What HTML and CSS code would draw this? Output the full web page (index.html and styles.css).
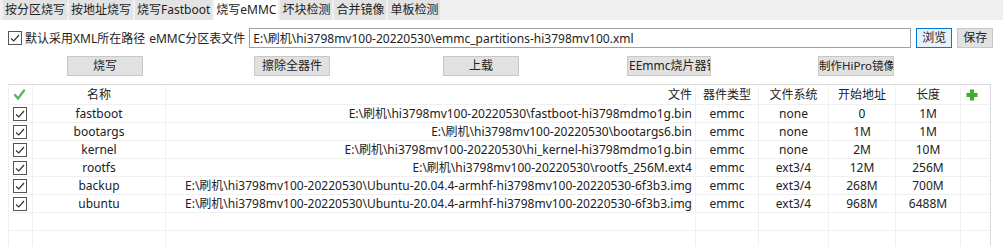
FILE: index.html
```html
<!DOCTYPE html>
<html lang="zh-CN">
<head>
    <meta charset="UTF-8">
    <title>烧写eMMC</title>
    <link rel="stylesheet" href="styles.css">
</head>
<body>
<div class="tabs">
    <span class="tab">按分区烧写</span>
    <span class="tab">按地址烧写</span>
    <span class="tab">烧写Fastboot</span>
    <span class="tab tab--active">烧写eMMC</span>
    <span class="tab">坏块检测</span>
    <span class="tab">合并镜像</span>
    <span class="tab">单板检测</span>
</div>

<div class="path-row">
    <label class="check-label">
        <span class="box"><svg width="12" height="12" viewBox="0 0 12 12"><path d="M2 6.5 L4.8 9 L10 3" fill="none" stroke="#333" stroke-width="1.2"/></svg></span>
        默认采用XML所在路径
    </label>
    <span class="path-label">eMMC分区表文件</span>
    <input type="text" class="path-input" value="E:\刷机\hi3798mv100-20220530\emmc_partitions-hi3798mv100.xml">
    <button class="btn btn--small btn--focus">浏览</button>
    <button class="btn btn--small">保存</button>
</div>

<div class="actions">
    <button class="btn">烧写</button>
    <button class="btn">擦除全器件</button>
    <button class="btn">上载</button>
    <button class="btn btn--clip">EEmmc烧片器镜像</button>
    <button class="btn">制作HiPro镜像</button>
</div>

<div class="grid-wrap">
<table class="grid">
    <thead>
    <tr>
        <th class="c-check"><svg width="11" height="11" viewBox="0 0 11 11"><path d="M1 6 L4 9.5 L10 1.5" fill="none" stroke="#5cb85c" stroke-width="2.4" stroke-linecap="round"/></svg></th>
        <th class="c-name">名称</th>
        <th class="c-file">文件</th>
        <th class="c-type">器件类型</th>
        <th class="c-fs">文件系统</th>
        <th class="c-start">开始地址</th>
        <th class="c-len">长度</th>
        <th class="c-add"><svg width="12" height="12" viewBox="0 0 12 12"><path d="M4 0.5 H8 V4 H11.5 V8 H8 V11.5 H4 V8 H0.5 V4 H4 Z" fill="#3fae2a"/></svg></th>
    </tr>
    </thead>
    <tbody>
    <tr>
        <td class="c-check"><span class="box"><svg width="12" height="12" viewBox="0 0 12 12"><path d="M2 6.5 L4.8 9 L10 3" fill="none" stroke="#333" stroke-width="1.2"/></svg></span></td>
        <td class="c-name">fastboot</td>
        <td class="c-file">E:\刷机\hi3798mv100-20220530\fastboot-hi3798mdmo1g.bin</td>
        <td>emmc</td><td>none</td><td>0</td><td>1M</td><td></td>
    </tr>
    <tr>
        <td class="c-check"><span class="box"><svg width="12" height="12" viewBox="0 0 12 12"><path d="M2 6.5 L4.8 9 L10 3" fill="none" stroke="#333" stroke-width="1.2"/></svg></span></td>
        <td class="c-name">bootargs</td>
        <td class="c-file">E:\刷机\hi3798mv100-20220530\bootargs6.bin</td>
        <td>emmc</td><td>none</td><td>1M</td><td>1M</td><td></td>
    </tr>
    <tr>
        <td class="c-check"><span class="box"><svg width="12" height="12" viewBox="0 0 12 12"><path d="M2 6.5 L4.8 9 L10 3" fill="none" stroke="#333" stroke-width="1.2"/></svg></span></td>
        <td class="c-name">kernel</td>
        <td class="c-file">E:\刷机\hi3798mv100-20220530\hi_kernel-hi3798mdmo1g.bin</td>
        <td>emmc</td><td>none</td><td>2M</td><td>10M</td><td></td>
    </tr>
    <tr>
        <td class="c-check"><span class="box"><svg width="12" height="12" viewBox="0 0 12 12"><path d="M2 6.5 L4.8 9 L10 3" fill="none" stroke="#333" stroke-width="1.2"/></svg></span></td>
        <td class="c-name">rootfs</td>
        <td class="c-file">E:\刷机\hi3798mv100-20220530\rootfs_256M.ext4</td>
        <td>emmc</td><td>ext3/4</td><td>12M</td><td>256M</td><td></td>
    </tr>
    <tr>
        <td class="c-check"><span class="box"><svg width="12" height="12" viewBox="0 0 12 12"><path d="M2 6.5 L4.8 9 L10 3" fill="none" stroke="#333" stroke-width="1.2"/></svg></span></td>
        <td class="c-name">backup</td>
        <td class="c-file">E:\刷机\hi3798mv100-20220530\Ubuntu-20.04.4-armhf-hi3798mv100-20220530-6f3b3.img</td>
        <td>emmc</td><td>ext3/4</td><td>268M</td><td>700M</td><td></td>
    </tr>
    <tr>
        <td class="c-check"><span class="box"><svg width="12" height="12" viewBox="0 0 12 12"><path d="M2 6.5 L4.8 9 L10 3" fill="none" stroke="#333" stroke-width="1.2"/></svg></span></td>
        <td class="c-name">ubuntu</td>
        <td class="c-file">E:\刷机\hi3798mv100-20220530\Ubuntu-20.04.4-armhf-hi3798mv100-20220530-6f3b3.img</td>
        <td>emmc</td><td>ext3/4</td><td>968M</td><td>6488M</td><td></td>
    </tr>
    <tr class="empty"><td></td><td></td><td></td><td></td><td></td><td></td><td></td><td></td></tr>
    <tr class="empty"><td></td><td></td><td></td><td></td><td></td><td></td><td></td><td></td></tr>
    </tbody>
</table>
</div>
</body>
</html>
```

FILE: styles.css
```css
html, body {
    margin: 0;
    padding: 0;
    background-color: #ffffff;
    overflow: hidden;
}

body {
    font-family: "Noto Sans", "Noto Sans CJK SC", sans-serif;
    font-size: 12px;
    color: #222;
    width: 1003px;
    height: 246px;
}

.tabs {
    display: flex;
    gap: 2px;
    height: 20px;
    padding: 0 0 0 3px;
    background: #f0f0f0;
    align-items: stretch;
}

.tab {
    display: flex;
    align-items: center;
    padding: 0 2px;
    background: #e3e3e3;
    color: #222;
    line-height: 20px;
}

.tab--active {
    background: #ffffff;
}

.path-row {
    display: flex;
    align-items: center;
    height: 20px;
    margin-top: 8px;
    padding-left: 8px;
}

.check-label {
    display: flex;
    align-items: center;
    gap: 3px;
}

.box {
    display: inline-flex;
    align-items: center;
    justify-content: center;
    width: 12px;
    height: 12px;
    border: 1px solid #555;
    background: #fff;
    box-sizing: content-box;
}

.path-label {
    margin-left: 4px;
}

.path-input {
    margin: 0 0 0 4px;
    width: 662px;
    height: 20px;
    box-sizing: border-box;
    border: 1px solid #a0a0a0;
    padding: 0 3px;
    font: inherit;
    color: #222;
}

.btn {
    font: inherit;
    color: #222;
    background: #e1e1e1;
    border: 1px solid #c8c8c8;
    height: 20px;
    width: 76px;
    padding: 0;
    margin: 0;
    line-height: 18px;
    white-space: nowrap;
    overflow: hidden;
}

.btn--small {
    width: 36px;
    margin-left: 5px;
}

.btn--focus {
    background: #e5f1fb;
    border: 1px solid #0078d7;
}

.btn--clip {
    width: 84px;
    text-overflow: clip;
    text-align: left;
    padding-left: 1px;
}

.actions {
    display: flex;
    height: 20px;
    margin-top: 8px;
    padding-left: 67px;
}

.actions .btn:nth-child(2) { margin-left: 111px; }
.actions .btn:nth-child(3) { margin-left: 113px; }
.actions .btn:nth-child(4) { margin-left: 108px; }
.actions .btn:nth-child(5) { margin-left: 107px; font-size: 11.5px; }

.grid-wrap {
    margin: 8px 0 0 8px;
    width: 982px;
    border-top: 1px solid #d9d9d9;
    border-right: 1px solid #d9d9d9;
    height: 170px;
    overflow: hidden;
}

.grid {
    border-collapse: collapse;
    table-layout: fixed;
    width: 982px;
    margin-top: 1px;
}

.grid th, .grid td {
    box-sizing: border-box;
    height: 18px;
    padding: 0 3px;
    border: 1px solid #f0f0f0;
    border-top: none;
    text-align: center;
    font-weight: normal;
    white-space: nowrap;
    overflow: hidden;
    line-height: 17px;
    color: #222;
}

.grid .c-check { width: 24px; padding: 0 0 0 4px; text-align: left; }
.grid .c-name { width: 133px; }
.grid .c-file { width: 530px; text-align: right; }
.grid .c-type { width: 63px; }
.grid .c-fs { width: 70px; }
.grid .c-start { width: 67px; }
.grid .c-len { width: 65px; }
.grid .c-add { width: 30px; text-align: left; padding-left: 5px; }

.grid td.c-check .box {
    vertical-align: middle;
}

.grid th svg, .grid td svg {
    display: block;
}

.grid th.c-check svg {
    margin-left: 1px;
}
```
